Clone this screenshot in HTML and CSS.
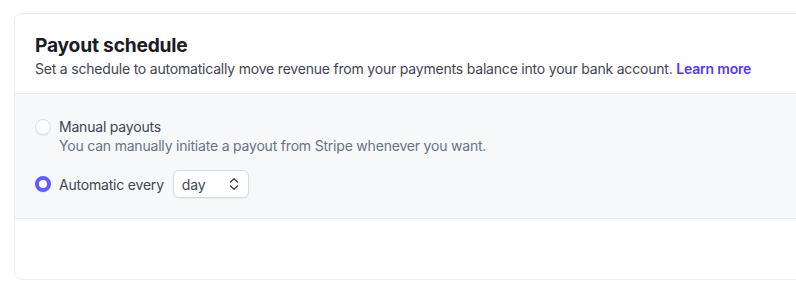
FILE: index.html
```html
<!DOCTYPE html>
<html lang="en">
<head>
  <meta charset="UTF-8">
  <title>Payout schedule</title>
  <link rel="stylesheet" href="styles.css">
</head>
<body>
  <div class="card">
    <div class="card-header">
      <h2 class="card-title">Payout schedule</h2>
      <p class="card-desc">Set a schedule to automatically move revenue from your payments balance into your bank account. <a href="#">Learn more</a></p>
    </div>

    <div class="card-body">
      <label class="option">
        <span class="radio"></span>
        <span class="option-text">
          <span class="option-label">Manual payouts</span>
          <span class="option-hint">You can manually initiate a payout from Stripe whenever you want.</span>
        </span>
      </label>

      <label class="option option-inline">
        <span class="radio checked"></span>
        <span class="option-label">Automatic every</span>
        <span class="select">
          <span>day</span>
          <svg width="12" height="14" viewBox="0 0 12 14" fill="none" stroke="#414552" stroke-width="1.4" stroke-linecap="round" stroke-linejoin="round">
            <path d="M2.5 5 6 1.8 9.5 5"/>
            <path d="M2.5 9 6 12.2 9.5 9"/>
          </svg>
        </span>
      </label>
    </div>

    <div class="card-footer"></div>
  </div>
</body>
</html>
```

FILE: styles.css
```css
:root {
  --text: #1a1b25;
  --text-body: #414552;
  --text-muted: #687385;
  --border: #ebeef1;
  --accent: #533afd;
  --soft: #f6f8fa;
}

* {
  margin: 0;
  padding: 0;
  box-sizing: border-box;
}

body {
  font-family: 'Inter', 'Liberation Sans', sans-serif;
  background: #fff;
  color: var(--text);
  overflow: hidden;
  padding: 13px 0 0 14px;
}

/* Card */
.card {
  width: 820px;
  border: 1px solid var(--border);
  border-radius: 8px;
  overflow: hidden;
}

.card-header {
  padding: 19px 20px 14px;
}

.card-title {
  font-size: 19.2px;
  font-weight: 700;
  letter-spacing: -0.2px;
  line-height: 24px;
  margin-bottom: 2px;
}

.card-desc {
  font-size: 14px;
  line-height: 20px;
  letter-spacing: -0.2px;
  color: var(--text-body);
}

.card-desc a {
  color: var(--accent);
  font-weight: 600;
  text-decoration: none;
}

/* Options */
.card-body {
  background: var(--soft);
  border-top: 1px solid var(--border);
  border-bottom: 1px solid var(--border);
  padding: 23px 20px 20px;
  display: flex;
  flex-direction: column;
  gap: 15px;
}

.option {
  display: flex;
  align-items: flex-start;
  gap: 8px;
  font-size: 14px;
  line-height: 19px;
  letter-spacing: -0.2px;
}

.option-inline {
  align-items: center;
}

.option-text {
  display: flex;
  flex-direction: column;
}

.option-label {
  color: var(--text-body);
}

.option-hint {
  color: var(--text-muted);
}

.radio {
  width: 16px;
  height: 16px;
  border-radius: 50%;
  background: #fff;
  border: 1px solid #d8dde3;
  box-shadow: 0 1px 1px rgba(0, 0, 0, 0.06);
  margin-top: 1.5px;
  flex-shrink: 0;
}

.option-inline .radio {
  margin-top: 0;
}

.radio.checked {
  background: #fff;
  border: 4.5px solid #635bff;
}

.select {
  display: flex;
  align-items: center;
  justify-content: space-between;
  width: 76px;
  height: 28px;
  margin-left: 1px;
  padding: 0 8px;
  background: #fff;
  border: 1px solid #d5dbe1;
  border-radius: 6px;
  box-shadow: 0 1px 1px rgba(0, 0, 0, 0.06);
  color: var(--text-body);
}

.card-footer {
  height: 60px;
}
```
